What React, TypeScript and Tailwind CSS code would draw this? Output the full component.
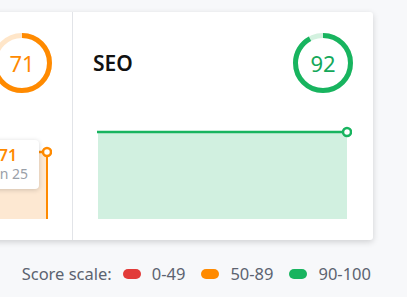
import React from "react";

const font = { fontFamily: '"Noto Sans", "Open Sans", Arial, sans-serif' };

type Tone = { stroke: string; track: string; text: string; fill: string };

const orange: Tone = { stroke: "#ff8a00", track: "#ffe6c9", text: "#ff8a00", fill: "#fde8d2" };
const green: Tone = { stroke: "#18b45f", track: "#d3f1df", text: "#14a85a", fill: "#d1f0e0" };

// circular score gauge, arc starts at 12 o'clock and goes clockwise
const ScoreRing = ({ score, tone }: { score: number; tone: Tone }) => {
  const r = 27.5;
  const c = 2 * Math.PI * r;
  return (
    <div className="relative w-[60px] h-[60px] flex items-center justify-center">
      <svg width="60" height="60" viewBox="0 0 60 60" className="absolute inset-0">
        <circle cx="30" cy="30" r={r} fill="none" stroke={tone.track} strokeWidth="5" />
        <circle
          cx="30"
          cy="30"
          r={r}
          fill="none"
          stroke={tone.stroke}
          strokeWidth="5"
          strokeDasharray={`${(c * score) / 100} ${c}`}
          transform="rotate(-90 30 30)"
        />
      </svg>
      <span className="relative text-[22px] leading-none" style={{ color: tone.text }}>
        {score}
      </span>
    </div>
  );
};

const Panel = ({
  title,
  score,
  tone,
  lineY,
  hover,
  border,
}: {
  title: string;
  score: number;
  tone: Tone;
  lineY: number;
  hover?: boolean;
  border?: boolean;
}) => (
  <div className={`w-[300px] shrink-0 px-5 pt-[21px] ${border ? "border-r border-[#e2e4e8]" : ""}`}>
    <div className="flex items-center justify-between h-[60px]">
      <h3 className="text-[21px] font-semibold text-[#111] leading-none">{title}</h3>
      <ScoreRing score={score} tone={tone} />
    </div>
    <div className="relative mt-[31px] w-[259px] h-[100px]">
      <svg width="259" height="100" viewBox="0 0 259 100">
        <rect x="5" y={lineY} width="249" height={95 - lineY} fill={tone.fill} />
        <line x1="4" y1={lineY} x2="254" y2={lineY} stroke={tone.stroke} strokeWidth="2.5" />
        {hover && <line x1="254" y1={lineY} x2="254" y2="95" stroke={tone.stroke} strokeWidth="2" />}
        <circle cx="254" cy={lineY} r="4" fill="#fff" stroke={tone.stroke} strokeWidth="2.5" />
      </svg>
      {hover && (
        <div className="absolute left-[184px] top-[16px] w-[62px] h-[49px] bg-white rounded-[4px] shadow-[0_1px_5px_rgba(0,0,0,0.18)] flex flex-col items-center justify-center">
          <span className="text-[16px] font-semibold leading-[19px]" style={{ color: tone.text }}>
            {score}
          </span>
          <span className="text-[14px] leading-[18px] text-[#9aa0a8]">Jan 25</span>
        </div>
      )}
    </div>
  </div>
);

const Legend = () => (
  <div className="flex items-center justify-end pr-[36px] mt-[22px] text-[16.5px] leading-6 text-[#5c6370]">
    <span>Score scale:</span>
    <span className="ml-[11px] w-[18px] h-[10px] rounded-full bg-[#e23b39]" />
    <span className="ml-[11px]">0-49</span>
    <span className="ml-[16px] w-[18px] h-[10px] rounded-full bg-[#ff8a00]" />
    <span className="ml-[11px]">50-89</span>
    <span className="ml-[16px] w-[18px] h-[10px] rounded-full bg-[#18b45f]" />
    <span className="ml-[11px]">90-100</span>
  </div>
);

export default function App() {
  return (
    <div className="w-[407px] h-[297px] overflow-hidden bg-[#f7f8fa] pt-3" style={font}>
      <div className="flex w-[600px] h-[228px] -ml-[227px] bg-white rounded-[3px] shadow-[0_2px_6px_rgba(0,0,0,0.16)]">
        <Panel title="Performance" score={71} tone={orange} lineY={28} hover border />
        <Panel title="SEO" score={92} tone={green} lineY={8} />
      </div>
      <Legend />
    </div>
  );
}
